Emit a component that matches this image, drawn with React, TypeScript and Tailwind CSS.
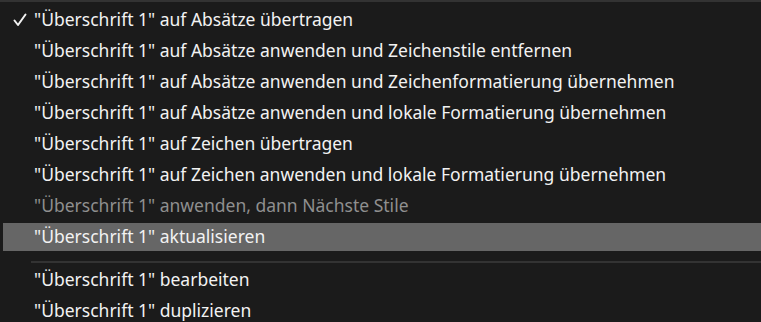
import React from 'react';

type Item = { label: string; checked?: boolean; disabled?: boolean; active?: boolean };

const top: Item[] = [
  { label: '"Überschrift 1" auf Absätze übertragen', checked: true },
  { label: '"Überschrift 1" auf Absätze anwenden und Zeichenstile entfernen' },
  { label: '"Überschrift 1" auf Absätze anwenden und Zeichenformatierung übernehmen' },
  { label: '"Überschrift 1" auf Absätze anwenden und lokale Formatierung übernehmen' },
  { label: '"Überschrift 1" auf Zeichen übertragen' },
  { label: '"Überschrift 1" auf Zeichen anwenden und lokale Formatierung übernehmen' },
  { label: '"Überschrift 1" anwenden, dann Nächste Stile', disabled: true },
  { label: '"Überschrift 1" aktualisieren', active: true },
];

const bottom: Item[] = [
  { label: '"Überschrift 1" bearbeiten' },
  { label: '"Überschrift 1" duplizieren' },
];

const Row: React.FC<{ item: Item }> = ({ item }) => (
  <div className="h-[31px] flex items-stretch py-[1.5px] pl-[3px]">
    <div
      className={`flex-1 flex items-center ${item.active ? 'bg-[#666666]' : ''} ${
        item.disabled ? 'text-[#8f8f8f]' : 'text-[#f2f2f2]'
      }`}
    >
      <span className="w-[31px] pl-[10px] flex items-center">
        {item.checked && (
          <svg width="14" height="14" viewBox="0 0 14 14" fill="none">
            <path d="M1.5 7.5 L5 12 L12.5 1.5" stroke="#f2f2f2" strokeWidth="2" strokeLinecap="round" strokeLinejoin="round" />
          </svg>
        )}
      </span>
      <span className="whitespace-nowrap">{item.label}</span>
    </div>
  </div>
);

export default function App() {
  return (
    <div
      className="w-[761px] h-[322px] overflow-hidden bg-[#1b1b1b] border-t-2 border-[#333333] text-[17.5px] pt-[2px]"
      style={{ fontFamily: '"Segoe UI", "Noto Sans", sans-serif' }}
    >
      {top.map((item) => (
        <Row key={item.label} item={item} />
      ))}
      <div className="h-[12px] flex items-end pl-[31px] pb-[1px]">
        <div className="h-[2px] w-full bg-[#333333]" />
      </div>
      {bottom.map((item) => (
        <Row key={item.label} item={item} />
      ))}
    </div>
  );
}
